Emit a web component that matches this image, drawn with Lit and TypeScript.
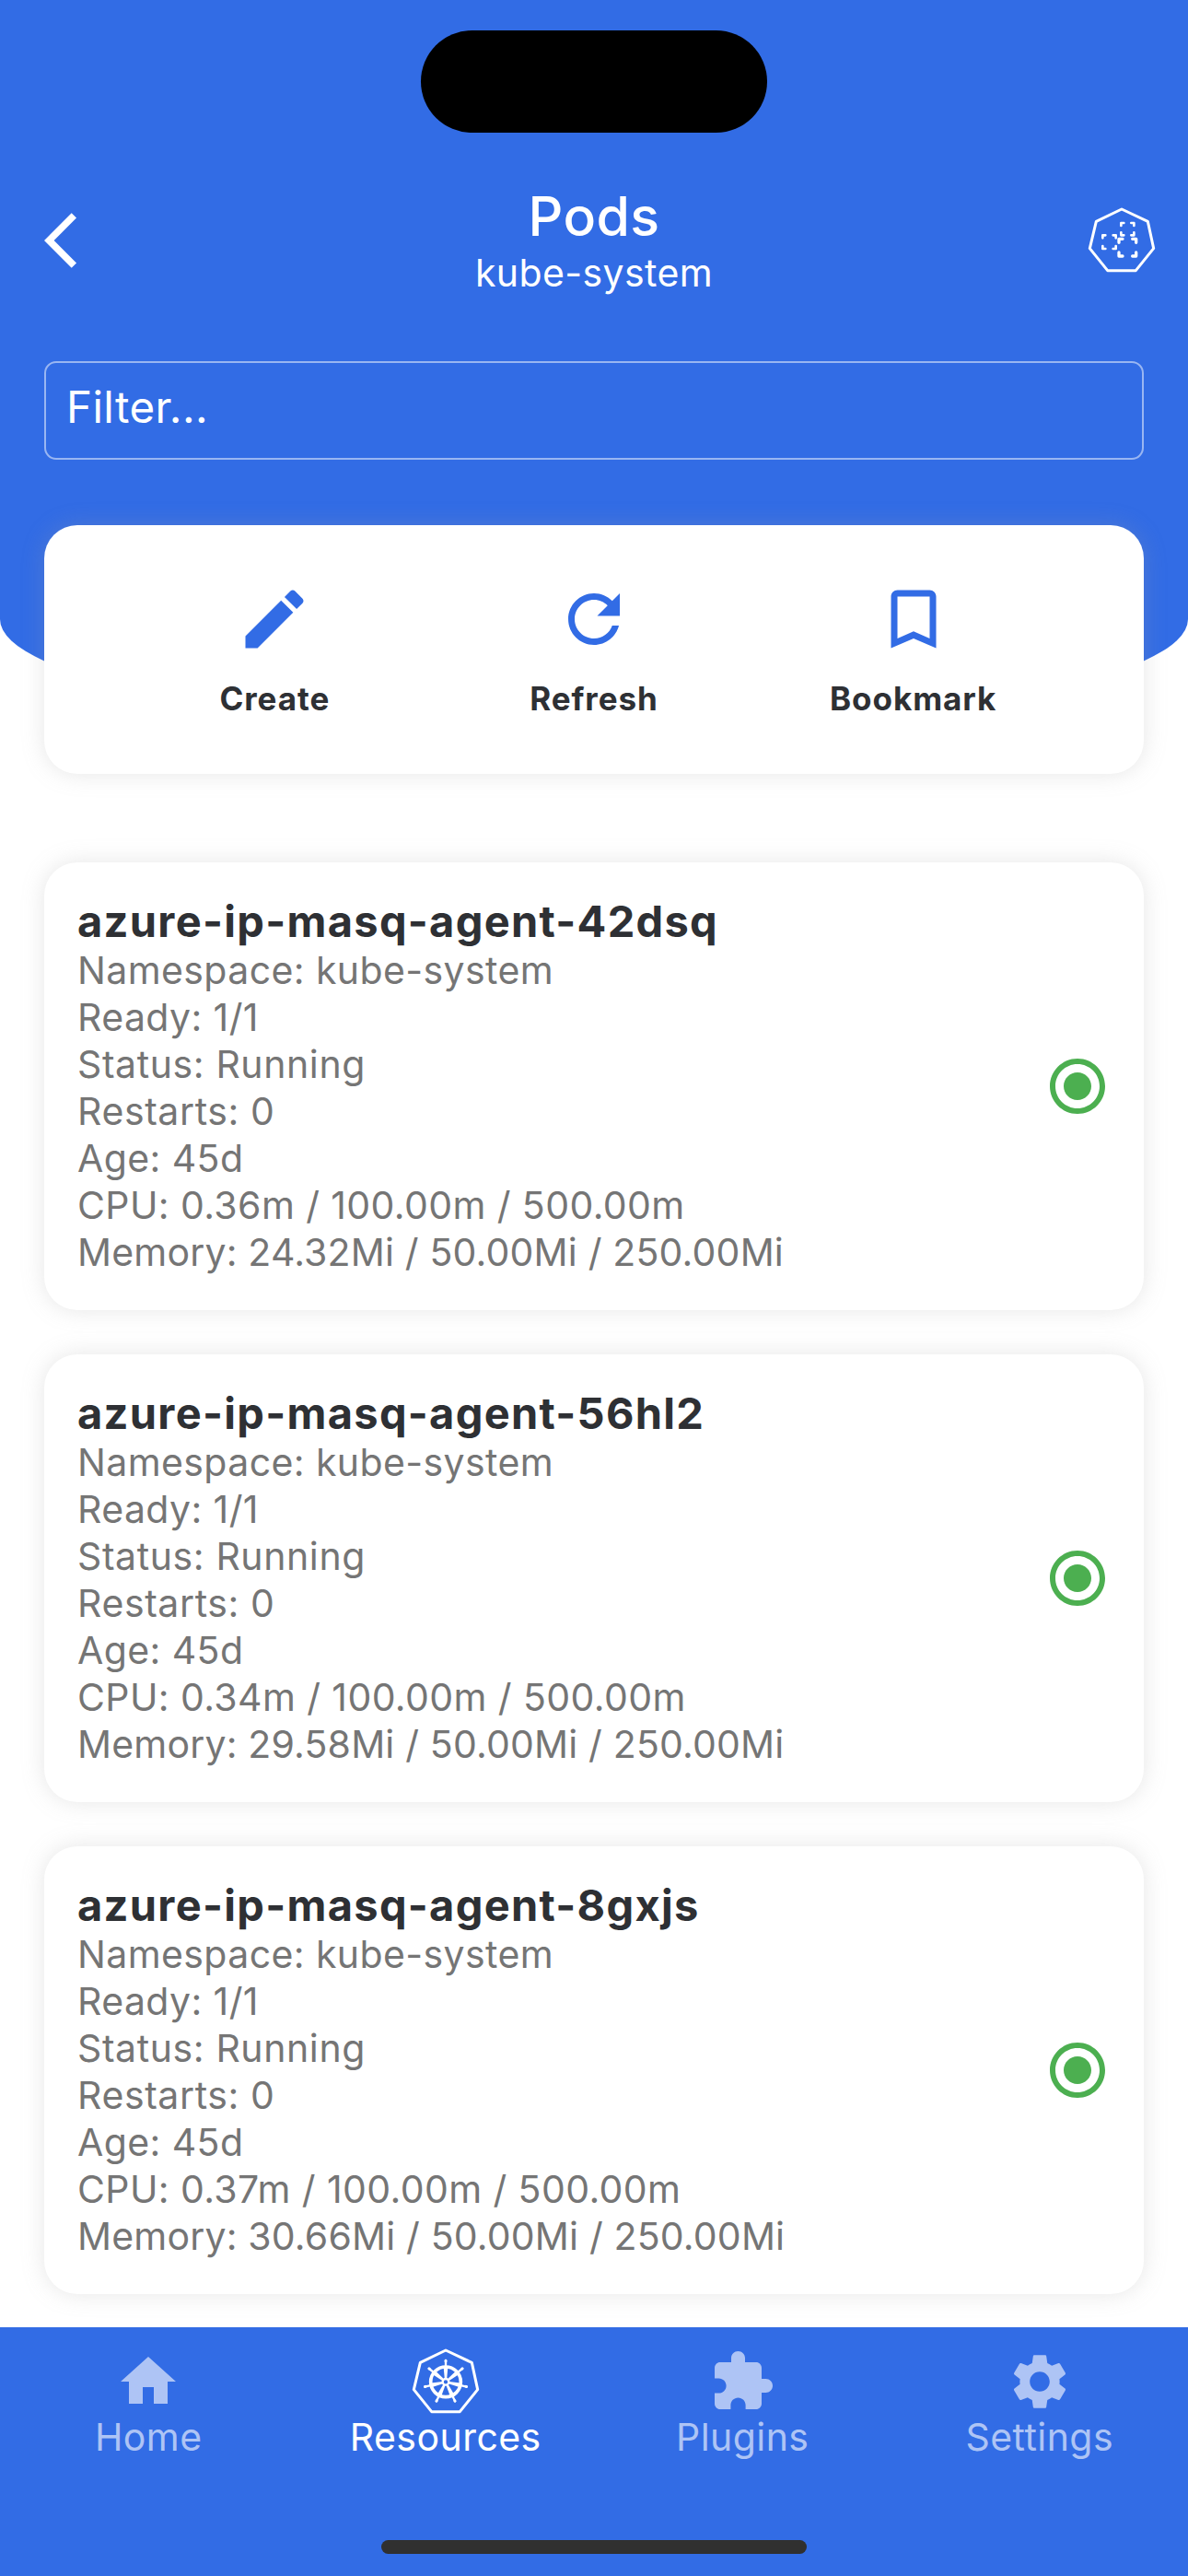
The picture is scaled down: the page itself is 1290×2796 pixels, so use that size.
import { LitElement, html, svg, css } from "lit";
import { customElement, property } from "lit/decorators.js";

const ICONS: Record<string, string> = {
  back: "M11.67 3.87L9.9 2.1 0 12l9.9 9.9 1.77-1.77L3.54 12z",
  create:
    "M3 17.25V21h3.75L17.81 9.94l-3.75-3.75L3 17.25zM20.71 7.04c.39-.39.39-1.02 0-1.41l-2.34-2.34c-.39-.39-1.02-.39-1.41 0l-1.83 1.83 3.75 3.75 1.83-1.83z",
  refresh:
    "M17.65 6.35C16.2 4.9 14.21 4 12 4c-4.42 0-7.99 3.58-7.99 8s3.57 8 7.99 8c3.73 0 6.84-2.55 7.73-6h-2.08c-.82 2.33-3.04 4-5.65 4-3.31 0-6-2.69-6-6s2.69-6 6-6c1.66 0 3.14.69 4.22 1.78L13 11h7V4l-2.35 2.35z",
  bookmark:
    "M17 3H7c-1.1 0-1.99.9-1.99 2L5 21l7-3 7 3V5c0-1.1-.9-2-2-2zm0 15l-5-2.18L7 18V5h10v13z",
  running:
    "M12 7c-2.76 0-5 2.24-5 5s2.24 5 5 5 5-2.24 5-5-2.24-5-5-5zm0-5C6.48 2 2 6.48 2 12s4.48 10 10 10 10-4.48 10-10S17.52 2 12 2zm0 18c-4.42 0-8-3.58-8-8s3.58-8 8-8 8 3.58 8 8-3.58 8-8 8z",
  home: "M10 20v-6h4v6h5v-8h3L12 3 2 12h3v8z",
  plugins:
    "M20.5 11H19V7c0-1.1-.9-2-2-2h-4V3.5C13 2.12 11.88 1 10.5 1S8 2.12 8 3.5V5H4c-1.1 0-1.99.9-1.99 2v3.8H3.5c1.49 0 2.7 1.21 2.7 2.7s-1.21 2.7-2.7 2.7H2V20c0 1.1.9 2 2 2h3.8v-1.5c0-1.49 1.21-2.7 2.7-2.7 1.49 0 2.7 1.21 2.7 2.7V22H17c1.1 0 2-.9 2-2v-4h1.5c1.38 0 2.5-1.12 2.5-2.5S21.88 11 20.5 11z",
  settings:
    "M19.14,12.94c0.04-0.3,0.06-0.61,0.06-0.94c0-0.32-0.02-0.64-0.07-0.94l2.03-1.58c0.18-0.14,0.23-0.41,0.12-0.61l-1.92-3.32c-0.12-0.22-0.37-0.29-0.59-0.22l-2.39,0.96c-0.5-0.38-1.03-0.7-1.62-0.94L14.4,2.81c-0.04-0.24-0.24-0.41-0.48-0.41h-3.84c-0.24,0-0.43,0.17-0.47,0.41L9.25,5.35C8.66,5.59,8.12,5.92,7.63,6.29L5.24,5.33c-0.22-0.08-0.47,0-0.59,0.22L2.74,8.87C2.62,9.08,2.66,9.34,2.86,9.48l2.03,1.58C4.84,11.36,4.8,11.69,4.8,12s0.02,0.64,0.07,0.94l-2.03,1.58c-0.18,0.14-0.23,0.41-0.12,0.61l1.92,3.32c0.12,0.22,0.37,0.29,0.59,0.22l2.39-0.96c0.5,0.38,1.03,0.7,1.62,0.94l0.36,2.54c0.05,0.24,0.24,0.41,0.48,0.41h3.84c0.24,0,0.44-0.17,0.47-0.41l0.36-2.54c0.59-0.24,1.13-0.56,1.62-0.94l2.39,0.96c0.22,0.08,0.47,0,0.59-0.22l1.92-3.32c0.12-0.22,0.07-0.47-0.12-0.61L19.14,12.94zM12,15.6c-1.98,0-3.6-1.62-3.6-3.6s1.62-3.6,3.6-3.6s3.6,1.62,3.6,3.6S13.98,15.6,12,15.6z",
};

const HEPTAGON = "M114 12L199 52L218 140L160 212H68L10 140L31 52Z";

// Open corners of a dashed square, leg length and origin in icon units.
const corners = (x: number, y: number, w: number, h: number, l: number) =>
  `M${x} ${y + l}V${y}H${x + l}M${x + w - l} ${y}H${x + w}V${y + l}` +
  `M${x + w} ${y + h - l}V${y + h}H${x + w - l}M${x + l} ${y + h}H${x}V${y + h - l}`;

const icon = (name: string) =>
  html`<svg class="icon" viewBox="0 0 24 24"><path fill="currentColor" d=${ICONS[name]} /></svg>`;

const podIcon = () => html`
  <svg class="hepta" viewBox="0 0 228 222" fill="none" stroke="currentColor" stroke-linejoin="round">
    <path stroke-width="9" d=${HEPTAGON} />
    <path stroke-width="8" stroke-linecap="round" d=${corners(52, 97, 43, 44, 9)} />
    <path stroke-width="8" stroke-linecap="round" d=${corners(112, 57, 42, 40, 9)} />
    <path stroke-width="10" stroke-linecap="round" d=${corners(105, 109, 56, 56, 12)} />
  </svg>
`;

const helmIcon = () => html`
  <svg class="hepta" viewBox="0 0 228 222" fill="none" stroke="currentColor" stroke-linejoin="round">
    <path stroke-width="9" d=${HEPTAGON} />
    <circle cx="114" cy="115" r="49" stroke-width="11" />
    ${[0, 1, 2, 3, 4, 5, 6].map(
      (i) => svg`
        <g transform="rotate(${(i * 360) / 7} 114 115)">
          <path fill="currentColor" stroke="none" d="M110.500 105L107 68H121L117.500 105Z" />
          <path stroke-width="7" stroke-linecap="round" d="M114 68V45" />
          <path stroke-width="9" stroke-linecap="round" d="M114 46V47" />
        </g>
      `
    )}
    <circle cx="114" cy="115" r="10" stroke-width="7" />
  </svg>
`;

interface Pod {
  name: string;
  cpu: string;
  memory: string;
}

const PODS: Pod[] = [
  { name: "azure-ip-masq-agent-42dsq", cpu: "0.36m", memory: "24.32Mi" },
  { name: "azure-ip-masq-agent-56hl2", cpu: "0.34m", memory: "29.58Mi" },
  { name: "azure-ip-masq-agent-8gxjs", cpu: "0.37m", memory: "30.66Mi" },
];

@customElement("pod-card")
export class PodCard extends LitElement {
  @property({ attribute: false }) pod!: Pod;

  static styles = css`
    :host {
      display: flex;
      align-items: center;
      justify-content: space-between;
      box-sizing: border-box;
      height: 486px;
      padding: 0 36px;
      border-radius: 36px;
      background: #fff;
      box-shadow: 0 0 24px rgba(158, 158, 158, 0.26);
    }
    .text {
      padding-bottom: 3px;
    }
    .name {
      font-size: 47px;
      line-height: 57px;
      font-weight: 700;
      color: #2e3034;
      letter-spacing: 1.3px;
    }
    .line {
      font-size: 41px;
      line-height: 51px;
      color: #757575;
      letter-spacing: 0.4px;
    }
    .line.status {
      letter-spacing: 0.6px;
    }
    .line.memory {
      letter-spacing: 0.18px;
    }
    .name,
    .line {
      white-space: pre;
    }
    .icon {
      flex: none;
      width: 72px;
      height: 72px;
      color: #4caf50;
    }
  `;

  render() {
    const { name, cpu, memory } = this.pod;
    return html`
      <div class="text">
        <div class="name">${name}</div>
        <div class="line">Namespace: kube-system</div>
        <div class="line">Ready: 1/1</div>
        <div class="line status">Status: Running</div>
        <div class="line status">Restarts: 0</div>
        <div class="line">Age: 45d</div>
        <div class="line">CPU: ${cpu} / 100.00m / 500.00m</div>
        <div class="line memory">Memory: ${memory} / 50.00Mi / 250.00Mi</div>
      </div>
      ${icon("running")}
    `;
  }
}

@customElement("app-root")
export class AppRoot extends LitElement {
  static styles = css`
    :host {
      display: flex;
      flex-direction: column;
      width: 1290px;
      height: 2796px;
      overflow: hidden;
      background: #fff;
      font-family: Inter, "Liberation Sans", sans-serif;
    }
    .header {
      flex: none;
      box-sizing: border-box;
      height: 792px;
      padding: 33px 48px 0;
      border-radius: 0 0 50% 50% / 0 0 120px 120px;
      background: #326ce5;
      color: #fff;
    }
    .island {
      width: 376px;
      height: 111px;
      margin: 0 auto;
      border-radius: 56px;
      background: #000;
    }
    .bar {
      display: grid;
      grid-template-columns: 130px 1fr 130px;
      align-items: center;
      height: 144px;
      margin: 45px -14px 0 0;
    }
    .bar .icon {
      width: 72px;
      height: 72px;
    }
    .titles {
      text-align: center;
      margin-left: -14px;
    }
    .title {
      font-size: 59px;
      line-height: 70px;
      padding-bottom: 2px;
      font-weight: 500;
      letter-spacing: 0.4px;
    }
    .subtitle {
      font-size: 41px;
      line-height: 48px;
      padding-bottom: 2px;
      letter-spacing: 0.4px;
    }
    .hepta {
      width: 76px;
      height: 74px;
    }
    .bar .hepta {
      justify-self: end;
      margin-bottom: 3px;
    }
    .filter {
      box-sizing: border-box;
      height: 107px;
      margin-top: 59px;
      padding: 0 22px;
      border: 2px solid rgba(255, 255, 255, 0.5);
      border-radius: 13px;
      font-size: 47.5px;
      line-height: 96px;
      letter-spacing: 0.4px;
    }
    .actions {
      flex: none;
      display: grid;
      grid-template-columns: repeat(3, 1fr);
      box-sizing: border-box;
      height: 270px;
      margin: -222px 48px 96px;
      padding: 60px 77px 0;
      border-radius: 36px;
      background: #fff;
      box-shadow: 0 0 24px rgba(158, 158, 158, 0.26);
    }
    .action {
      display: flex;
      flex-direction: column;
      align-items: center;
      gap: 22px;
      color: #326ce5;
    }
    .action .icon {
      width: 84px;
      height: 84px;
    }
    .action-label {
      font-size: 35px;
      line-height: 44px;
      font-weight: 700;
      color: #2e3034;
      letter-spacing: 0.95px;
    }
    .pods {
      flex: 1;
      min-height: 0;
      display: flex;
      flex-direction: column;
      gap: 48px;
      padding: 0 48px;
    }
    pod-card {
      flex: none;
    }
    .nav {
      position: relative;
      flex: none;
      display: grid;
      grid-template-columns: repeat(4, 1fr);
      align-items: start;
      box-sizing: border-box;
      height: 270px;
      padding-top: 23px;
      background: #326ce5;
      color: #fff;
    }
    .tab {
      display: flex;
      flex-direction: column;
      align-items: center;
      color: #aec4f5;
    }
    .tab.active {
      color: #fff;
    }
    .tab .icon {
      width: 72px;
      height: 72px;
    }
    .tab .hepta {
      margin: -2px 0 0;
    }
    .tab-label {
      font-size: 41px;
      line-height: 48px;
      letter-spacing: 0.45px;
    }
    .indicator {
      position: absolute;
      left: 414px;
      bottom: 24px;
      width: 462px;
      height: 15px;
      border-radius: 8px;
      background: #303030;
    }
  `;

  render() {
    return html`
      <header class="header">
        <div class="island"></div>
        <div class="bar">
          ${icon("back")}
          <div class="titles">
            <div class="title">Pods</div>
            <div class="subtitle">kube-system</div>
          </div>
          ${podIcon()}
        </div>
        <div class="filter">Filter...</div>
      </header>
      <section class="actions">
        <div class="action">${icon("create")}<span class="action-label">Create</span></div>
        <div class="action">${icon("refresh")}<span class="action-label">Refresh</span></div>
        <div class="action">${icon("bookmark")}<span class="action-label">Bookmark</span></div>
      </section>
      <main class="pods">${PODS.map((pod) => html`<pod-card .pod=${pod}></pod-card>`)}</main>
      <nav class="nav">
        <div class="tab">${icon("home")}<span class="tab-label">Home</span></div>
        <div class="tab active">${helmIcon()}<span class="tab-label">Resources</span></div>
        <div class="tab">${icon("plugins")}<span class="tab-label">Plugins</span></div>
        <div class="tab">${icon("settings")}<span class="tab-label">Settings</span></div>
        <div class="indicator"></div>
      </nav>
    `;
  }
}
